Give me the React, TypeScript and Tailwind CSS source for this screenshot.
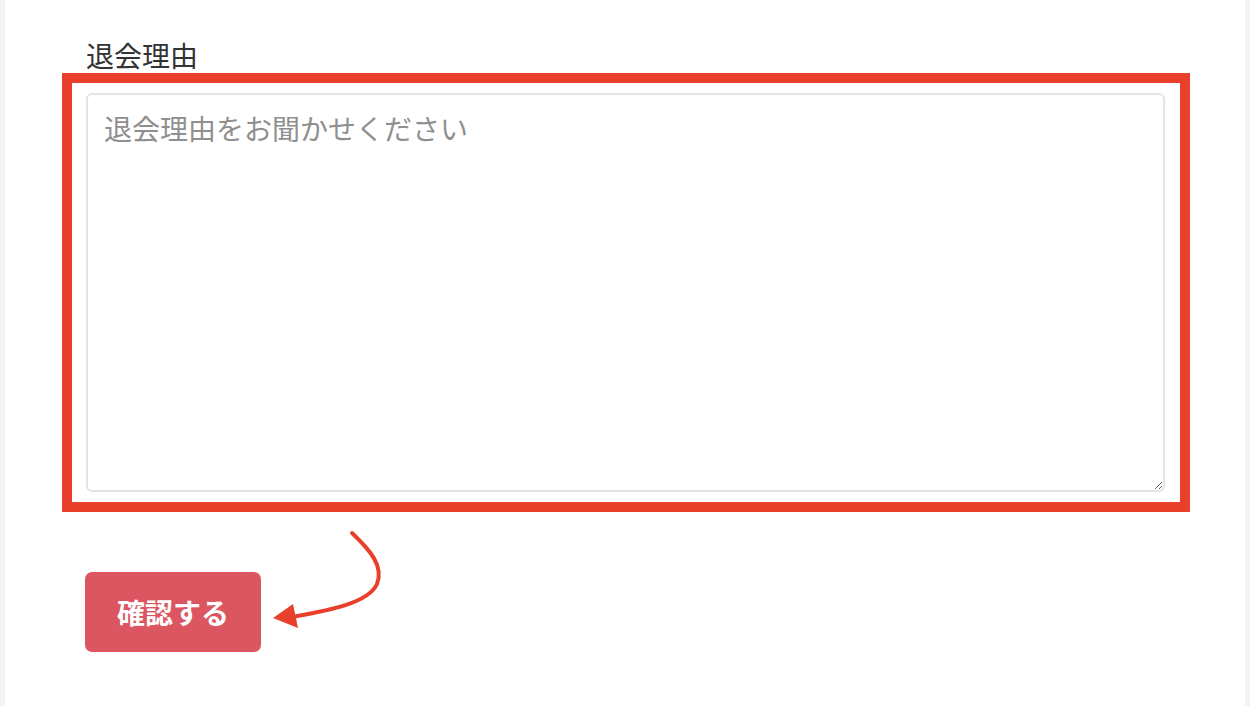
export default function App() {
  return (
    <div className="relative flex h-[706px] w-[1250px] overflow-hidden bg-white font-['Noto_Sans_CJK_JP',sans-serif]">
      <div className="w-[5px] shrink-0 bg-[#f3f4f5]" />

      <main className="flex-1 bg-white pl-[57px] pt-[38px]">
        <label className="ml-[24px] block text-[28px] leading-[34px] text-[#333333]">退会理由</label>

        <div className="mt-[1px] h-[439px] w-[1128px] border-[10px] border-[#e8402b] pb-[10px] pl-[14px] pr-[15px] pt-[10px]">
          <textarea
            className="h-full w-full resize-y rounded-[6px] border-2 border-[#e4e4e4] bg-white px-4 pt-[12px] text-[28px] leading-[42px] text-[#333333] outline-none placeholder:text-[#8f8f8f]"
            placeholder="退会理由をお聞かせください"
          />
        </div>

        <button className="ml-[23px] mt-[60px] flex h-[80px] w-[176px] items-center justify-center rounded-[7px] bg-[#db5660] text-[28px] font-bold text-white">
          確認する
        </button>
      </main>

      <div className="w-[5px] shrink-0 bg-[#f3f4f5]" />

      {/* annotation arrow */}
      <svg className="pointer-events-none absolute left-0 top-0" width="1250" height="706" viewBox="0 0 1250 706">
        <path
          d="M352 533 C 370 550, 384 566, 377 584 C 368 604, 325 611, 292 617"
          fill="none"
          stroke="#e8402b"
          strokeWidth="4"
          strokeLinecap="round"
        />
        <polygon points="273,618 293,604 298,628" fill="#e8402b" />
      </svg>
    </div>
  );
}
